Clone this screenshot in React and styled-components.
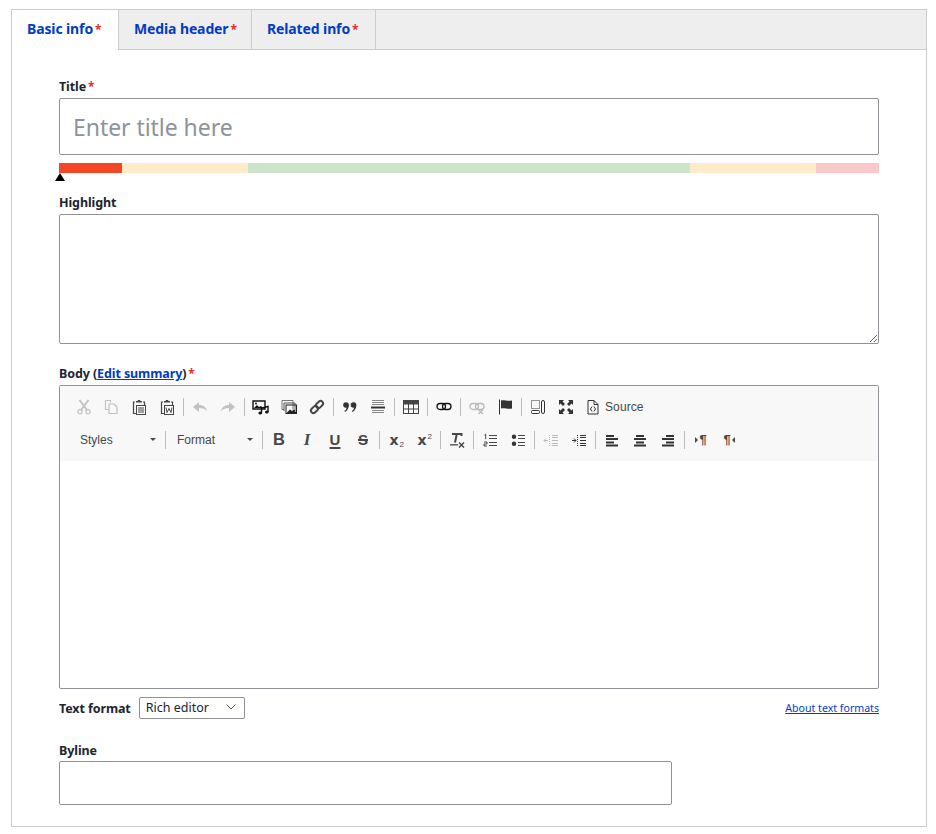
import React from "react";
import styled, { createGlobalStyle } from "styled-components";

const Global = createGlobalStyle`
  html, body { margin: 0; padding: 0; background: #fff; }
  body { font-family: "Noto Sans", "Open Sans", sans-serif; color: #222330; }
  * { box-sizing: border-box; }
`;

const Page = styled.div`
  width: 916px;
  margin: 9px 0 0 11px;
  border: 1px solid #ccc;
`;
const TabBar = styled.div`
  display: flex;
  height: 40px;
  background: #eee;
  border-bottom: 1px solid #ccc;
`;
const Tab = styled.div`
  width: ${(p) => p.$w}px;
  height: ${(p) => (p.$active ? 40 : 39)}px;
  padding-left: ${(p) => p.$pad}px;
  background: ${(p) => (p.$active ? "#fff" : "#eee")};
  border-right: 1px solid #ccc;
  font-size: 14px;
  font-weight: 700;
  line-height: 37px;
  color: #003cc5;
  letter-spacing: -0.12px;
`;
const Mark = styled.span`
  color: #e0332a;
  font-size: 12px;
  margin-left: 2px;
  font-weight: 700;
`;
const Panel = styled.div`
  padding: 28px 47px 21px;
`;
const Label = styled.div`
  font-size: 12.5px;
  font-weight: 700;
  line-height: 18px;
  margin: ${(p) => p.$top || 0}px 0 ${(p) => p.$bottom ?? 2}px;
  letter-spacing: -0.1px;
`;
const LabelLink = styled.a`
  color: #003cc5;
  text-decoration: underline;
`;
const TitleInput = styled.input`
  display: block;
  width: 100%;
  height: 57px;
  padding: 0 13px;
  border: 1px solid #919297;
  border-radius: 2px;
  background: #fff;
  font: 400 23px "Noto Sans", sans-serif;
  letter-spacing: -0.05px;
  outline: none;
  &::placeholder { color: #8e929c; opacity: 1; }
`;
const Meter = styled.div`
  display: flex;
  height: 10px;
  margin-top: 8px;
`;
const MeterPart = styled.div`
  flex: ${(p) => p.$grow} 0 0;
  background: ${(p) => p.$color};
`;
const Pointer = styled.div`
  width: 0;
  height: 0;
  margin-left: -4px;
  border-left: 5px solid transparent;
  border-right: 5px solid transparent;
  border-bottom: 8px solid #000;
`;
const Area = styled.textarea`
  display: block;
  width: 100%;
  height: 130px;
  border: 1px solid #919297;
  border-radius: 2px;
  background: #fff;
  outline: none;
  resize: vertical;
`;
const Editor = styled.div`
  height: 304px;
  border: 1px solid #919297;
  border-radius: 2px;
  background: #fff;
`;
const Toolbar = styled.div`
  height: 75px;
  padding: 4px 0 5px 9px;
  background: #f8f8f8;
`;
const ToolRow = styled.div`
  display: flex;
  align-items: center;
  height: 33px;
`;
const ToolBtn = styled.div`
  width: 28px;
  height: 24px;
  flex: none;
  display: flex;
  align-items: center;
  justify-content: center;
  color: #474747;
  opacity: ${(p) => (p.$off ? 0.3 : 1)};
`;
const Sep = styled.div`
  width: 1px;
  height: 18px;
  flex: none;
  margin: 0 2px;
  background: #bcbcbc;
`;
const SourceBtn = styled.div`
  display: flex;
  align-items: center;
  gap: 4px;
  margin-left: 5px;
  font: 400 12px "Liberation Sans", Arial, sans-serif;
  letter-spacing: 0.1px;
  color: #474747;
`;
const Combo = styled.div`
  width: ${(p) => p.$w}px;
  flex: none;
  display: flex;
  align-items: center;
  justify-content: space-between;
  padding: 0 7px 0 ${(p) => p.$pad}px;
  font: 400 12px "Liberation Sans", Arial, sans-serif;
  color: #474747;
`;
const Caret = styled.span`
  width: 0;
  height: 0;
  border-left: 3px solid transparent;
  border-right: 3px solid transparent;
  border-top: 3px solid #474747;
`;
const Glyph = styled.span`
  font: 700 16.5px "Liberation Sans", Arial, sans-serif;
  line-height: 1;
  color: #474747;
`;
const SerifI = styled(Glyph)`
  font: italic 700 17px "Liberation Serif", serif;
`;
const LinedGlyph = styled(Glyph)`
  font-size: 15px;
  text-decoration: ${(p) => p.$line};
  text-decoration-thickness: 1.5px;
  text-underline-offset: 2px;
`;
const ScriptX = styled.span`
  position: relative;
  left: -2px;
  font: 700 14px "DejaVu Sans", sans-serif;
  line-height: 1;
  color: #474747;
  small {
    position: absolute;
    left: 10px;
    top: ${(p) => (p.$up ? -1 : 7)}px;
    font: 400 8px "Liberation Sans", sans-serif;
  }
`;
const Para = styled.span`
  display: flex;
  align-items: center;
  gap: 1px;
  font: 700 13px "Liberation Sans", Arial, sans-serif;
  color: #474747;
  i {
    width: 0;
    height: 0;
    border-top: 3px solid transparent;
    border-bottom: 3px solid transparent;
    ${(p) => (p.$rtl ? "border-right: 3px solid #474747;" : "border-left: 3px solid #474747;")}
  }
`;
const FormatRow = styled.div`
  display: flex;
  align-items: center;
  justify-content: space-between;
  height: 22px;
  margin-top: 8px;
`;
const FormatLeft = styled.div`
  display: flex;
  align-items: center;
  gap: 8px;
  font-size: 12.5px;
  font-weight: 700;
  letter-spacing: -0.1px;
`;
const FakeSelect = styled.div`
  width: 106px;
  height: 22px;
  display: flex;
  align-items: center;
  justify-content: space-between;
  padding: 0 7px 2px 6px;
  border: 1px solid #919297;
  border-radius: 2px;
  font-size: 12.5px;
  font-weight: 400;
  letter-spacing: 0;
`;
const AboutLink = styled.a`
  color: #003cc5;
  font-size: 10.6px;
  text-decoration: underline;
`;
const Byline = styled.input`
  display: block;
  width: 613px;
  height: 44px;
  border: 1px solid #919297;
  border-radius: 2px;
  outline: none;
  background: #fff;
`;

const Ico = ({ children, w = 16 }) => (
  <svg width={w} height="16" viewBox={`0 0 ${w} 16`} fill="none" stroke="none">
    {children}
  </svg>
);
const S = { stroke: "currentColor", strokeWidth: 1.2, fill: "none" };

const Cut = () => (
  <Ico>
    <g transform="translate(1 0)">
      <path d="M3.500 1 L11 11 M12.500 1 L5 11" stroke="currentColor" strokeWidth="2" />
      <circle cx="4" cy="12.800" r="2.100" {...S} />
      <circle cx="12" cy="12.800" r="2.100" {...S} />
    </g>
  </Ico>
);
const Copy = () => (
  <Ico>
    <path d="M2.500 1.500h5l0 2M2.500 1.500v9h3" {...S} />
    <path d="M6 5h5l3 3v6.500H6z" {...S} />
  </Ico>
);
const PasteBase = ({ children }) => (
  <Ico>
    <path d="M4 3H2.500v11.500H5M12 3h1.500v3" {...S} />
    <path d="M5 3.500V2h1.500l.5-1h2l.5 1H11v1.500z" fill="currentColor" />
    <rect x="5.500" y="6.500" width="9" height="9" stroke="currentColor" fill="none" />
    {children}
  </Ico>
);
const Paste = () => (
  <PasteBase>
    <path d="M7 9h6M7 11h6M7 13h6" stroke="currentColor" />
  </PasteBase>
);
const PasteWord = () => (
  <PasteBase>
    <path d="M7 8.500l1 5 2-4 2 4 1-5" stroke="currentColor" fill="none" />
  </PasteBase>
);
const Undo = ({ flip }) => (
  <Ico>
    <path
      transform={flip ? "translate(16 0) scale(-1 1)" : undefined}
      d="M1 8l6-5v3c4 0 7 2 8 6-2-2-4-3-8-3v4z"
      fill="currentColor"
    />
  </Ico>
);
const Media = () => (
  <Ico w={18}>
    <path d="M1 2h12v8H1z" stroke="#111" strokeWidth="1.400" fill="none" />
    <path d="M2 9l3-3 2 2 2-1 2 2z" fill="#111" />
    <circle cx="4" cy="4.600" r="1" fill="#111" />
    <path d="M9.500 14V9l6.500-1.500V13" stroke="#111" strokeWidth="1.400" fill="none" />
    <ellipse cx="8.200" cy="14" rx="1.800" ry="1.500" fill="#111" />
    <ellipse cx="14.800" cy="13" rx="1.800" ry="1.500" fill="#111" />
  </Ico>
);
const Gallery = () => (
  <Ico>
    <path d="M1 1.500h11v9M1 1.500v9h2" stroke="#777" fill="none" />
    <path d="M3 4h11v8M3 4v8" stroke="#555" fill="none" />
    <rect x="5" y="6" width="10.500" height="8.500" stroke="#222" fill="none" />
    <path d="M5.500 14l3.500-3.500 2 1.500 2-1.500 2.500 3.500z" fill="#222" />
  </Ico>
);
const Chain = () => (
  <Ico>
    <g transform="rotate(-45 8 8)" fill="none" stroke="currentColor" strokeWidth="2">
      <rect x="0.500" y="5.500" width="8" height="5" rx="2.500" />
      <rect x="7.500" y="5.500" width="8" height="5" rx="2.500" />
    </g>
  </Ico>
);
const Quote = () => (
  <Ico>
    <circle cx="4" cy="6" r="2.800" fill="#333" />
    <path d="M6.700 6c.2 3-1.200 5.500-3.700 7l-.6-1c1.500-1 2.200-2.500 2.200-4z" fill="#333" />
    <circle cx="11.500" cy="6" r="2.800" fill="#333" />
    <path d="M14.200 6c.2 3-1.200 5.500-3.700 7l-.6-1c1.500-1 2.200-2.500 2.200-4z" fill="#333" />
  </Ico>
);
const Hr = () => (
  <Ico>
    <path d="M2 1.500h12M2 3.500h12M2 5.500h12M2 11.500h12M2 13.500h12" stroke="#888" />
    <path d="M1 8.500h14" stroke="#333" strokeWidth="2" />
  </Ico>
);
const Table = () => (
  <Ico>
    <rect x="0.500" y="1.500" width="15" height="13" stroke="#444" fill="none" />
    <rect x="0.500" y="1.500" width="15" height="4" fill="#444" />
    <path d="M5.500 5v9M10.500 5v9M1 10h14" stroke="#444" />
  </Ico>
);
const HLink = ({ x, color = "#111" }) => (
  <Ico>
    <rect x="1" y="4.500" width="8.500" height="6" rx="3" stroke={color} strokeWidth="1.300" fill="none" />
    <rect x="6.500" y="4.500" width="8.500" height="6" rx="3" stroke={color} strokeWidth="1.300" fill="none" />
    {x && <path d="M9.500 10.500l4.500 4.500M14 10.500l-4.500 4.500" stroke={color} strokeWidth="1.500" />}
  </Ico>
);
const Flag = () => (
  <Ico>
    <path d="M2.500 0.500v15" stroke="#333" />
    <path d="M4 1.500c3-1 6 1 11 0v8c-4 1-8-1-11 0z" fill="#333" />
  </Ico>
);
const Blocks = () => (
  <Ico>
    <rect x="1.500" y="1.500" width="8" height="8" stroke="#333" strokeDasharray="1 1" fill="none" />
    <rect x="1.500" y="11.500" width="8" height="3" rx="1" stroke="#333" fill="none" />
    <rect x="11.500" y="1.500" width="3" height="13" rx="1.500" stroke="#333" fill="none" />
  </Ico>
);
const Maximize = () => (
  <Ico>
    <path d="M1 1h5L4.500 2.500 7 5 5 7 2.500 4.500 1 6zM15 1v5l-1.500-1.500L11 7 9 5l2.500-2.500L10 1zM1 15v-5l1.500 1.500L5 9l2 2-2.500 2.500L6 15zM15 15h-5l1.500-1.500L9 11l2-2 2.500 2.500L15 10z" fill="#333" />
  </Ico>
);
const SourceIco = () => (
  <Ico>
    <path d="M3 1.500h6l4 4v9.500H3z" stroke="#333" fill="none" />
    <path d="M9 1.500v4h4" stroke="#333" fill="none" />
    <path d="M7 7.500L5.500 10 7 12.500M9 7.500L10.500 10 9 12.500" stroke="#333" fill="none" />
  </Ico>
);
const Clear = () => (
  <Ico>
    <path d="M3 2h9.500v2M7.800 2L6 10.500" stroke="#474747" strokeWidth="2" fill="none" />
    <path d="M1 12.800h8" stroke="#474747" strokeWidth="1.300" />
    <path d="M10 10.500l5 5M15 10.500l-5 5" stroke="#474747" strokeWidth="1.500" />
  </Ico>
);
const Ol = () => (
  <Ico>
    <path d="M7 3.500h8M7 6.500h8M7 10.500h8M7 13.500h8" stroke="#474747" />
    <path d="M2.500 3l1.200-.8v5M2 10h3v2H2v2h3" stroke="#333" strokeWidth="0.900" fill="none" />
  </Ico>
);
const Ul = () => (
  <Ico>
    <circle cx="4" cy="4.700" r="2.200" fill="#333" />
    <circle cx="4" cy="11.700" r="2.200" fill="#333" />
    <path d="M8 3.500h7M8 6.500h7M8 10.500h7M8 13.500h7" stroke="#474747" />
  </Ico>
);
const Indent = ({ out }) => (
  <Ico>
    <path d="M6.500 3v11" stroke="#333" strokeDasharray="1 1" />
    <path d="M9 3.500h6M9 5.500h6M9 8.500h6M9 11.500h6M9 13.500h6" stroke="#333" />
    <path d={out ? "M5 8.500H1M3 6.500l-2 2 2 2" : "M1 8.500h4M3 6.500l2 2-2 2"} stroke="#333" fill="none" />
  </Ico>
);
const Align = ({ mode }) => {
  const short = 8;
  const sx = mode === "l" ? 2 : mode === "c" ? 4 : 6;
  return (
    <Ico>
      {[3, 6, 9.500, 12.500].map((y, i) => (
        <rect key={y} x={i % 2 ? 2 : sx} y={y} width={i % 2 ? 12 : short} height="2" fill="#333" />
      ))}
    </Ico>
  );
};

const tabs = [
  { name: "Basic info", w: 107, pad: 15, active: true },
  { name: "Media header", w: 133, pad: 15 },
  { name: "Related info", w: 124, pad: 15 },
];

export default function App() {
  return (
    <>
      <Global />
      <Page>
        <TabBar>
          {tabs.map((t) => (
            <Tab key={t.name} $w={t.w} $pad={t.pad} $active={t.active}>
              {t.name}
              <Mark>*</Mark>
            </Tab>
          ))}
        </TabBar>
        <Panel>
          <Label>
            Title<Mark>*</Mark>
          </Label>
          <TitleInput placeholder="Enter title here" />
          <Meter>
            <MeterPart $grow={63} $color="#f44725" />
            <MeterPart $grow={126} $color="#feebc8" />
            <MeterPart $grow={442} $color="#cde5cb" />
            <MeterPart $grow={126} $color="#feebc8" />
            <MeterPart $grow={63} $color="#f9c9ca" />
          </Meter>
          <Pointer />
          <Label $top={13}>Highlight</Label>
          <Area />
          <Label $top={21}>
            Body (<LabelLink>Edit summary</LabelLink>)<Mark>*</Mark>
          </Label>
          <Editor>
            <Toolbar>
              <ToolRow>
                <ToolBtn $off><Cut /></ToolBtn>
                <ToolBtn $off><Copy /></ToolBtn>
                <ToolBtn><Paste /></ToolBtn>
                <ToolBtn><PasteWord /></ToolBtn>
                <Sep />
                <ToolBtn $off><Undo /></ToolBtn>
                <ToolBtn $off><Undo flip /></ToolBtn>
                <Sep />
                <ToolBtn><Media /></ToolBtn>
                <ToolBtn><Gallery /></ToolBtn>
                <ToolBtn><Chain /></ToolBtn>
                <Sep />
                <ToolBtn><Quote /></ToolBtn>
                <ToolBtn><Hr /></ToolBtn>
                <Sep />
                <ToolBtn><Table /></ToolBtn>
                <Sep />
                <ToolBtn><HLink /></ToolBtn>
                <Sep />
                <ToolBtn $off><HLink x color="#333" /></ToolBtn>
                <ToolBtn><Flag /></ToolBtn>
                <Sep />
                <ToolBtn><Blocks /></ToolBtn>
                <ToolBtn><Maximize /></ToolBtn>
                <SourceBtn>
                  <SourceIco />
                  Source
                </SourceBtn>
              </ToolRow>
              <ToolRow>
                <Combo $w={94} $pad={11}>Styles<Caret /></Combo>
                <Sep />
                <Combo $w={92} $pad={9}>Format<Caret /></Combo>
                <Sep />
                <ToolBtn><Glyph>B</Glyph></ToolBtn>
                <ToolBtn><SerifI>I</SerifI></ToolBtn>
                <ToolBtn><LinedGlyph $line="underline">U</LinedGlyph></ToolBtn>
                <ToolBtn><LinedGlyph $line="line-through">S</LinedGlyph></ToolBtn>
                <Sep />
                <ToolBtn><ScriptX>x<small>2</small></ScriptX></ToolBtn>
                <ToolBtn><ScriptX $up>x<small>2</small></ScriptX></ToolBtn>
                <Sep />
                <ToolBtn><Clear /></ToolBtn>
                <Sep />
                <ToolBtn><Ol /></ToolBtn>
                <ToolBtn><Ul /></ToolBtn>
                <Sep />
                <ToolBtn $off><Indent out /></ToolBtn>
                <ToolBtn><Indent /></ToolBtn>
                <Sep />
                <ToolBtn><Align mode="l" /></ToolBtn>
                <ToolBtn><Align mode="c" /></ToolBtn>
                <ToolBtn><Align mode="r" /></ToolBtn>
                <Sep />
                <ToolBtn><Para><i />¶</Para></ToolBtn>
                <ToolBtn><Para $rtl>¶<i /></Para></ToolBtn>
              </ToolRow>
            </Toolbar>
          </Editor>
          <FormatRow>
            <FormatLeft>
              Text format
              <FakeSelect>
                Rich editor
                <svg width="12" height="8" viewBox="0 0 12 8" fill="none">
                  <path d="M1.500 1.500L6 6l4.500-4.500" stroke="#555" />
                </svg>
              </FakeSelect>
            </FormatLeft>
            <AboutLink>About text formats</AboutLink>
          </FormatRow>
          <Label $top={23} $bottom={1}>Byline</Label>
          <Byline />
        </Panel>
      </Page>
    </>
  );
}
